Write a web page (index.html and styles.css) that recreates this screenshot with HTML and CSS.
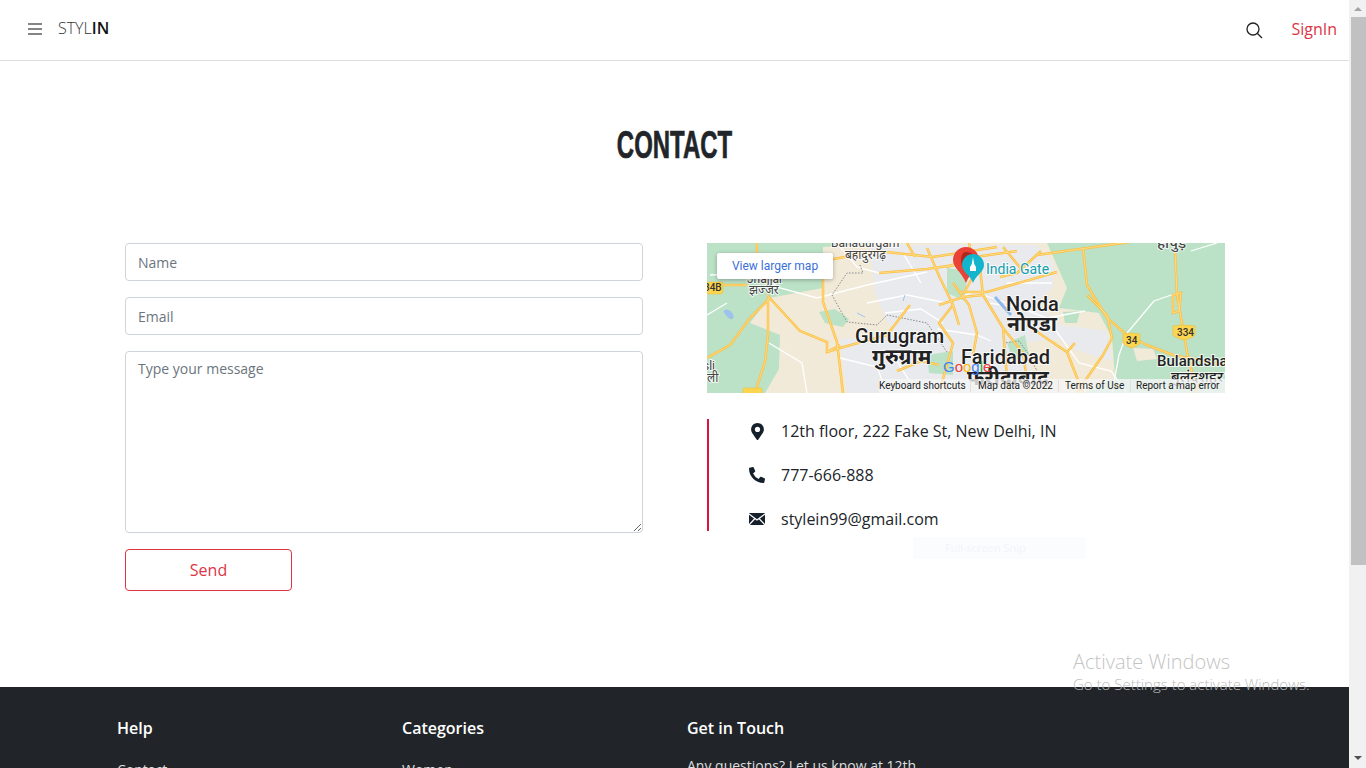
FILE: index.html
```html
<!DOCTYPE html>
<html lang="en">
<head>
<meta charset="utf-8">
<title>Contact</title>
<link rel="stylesheet" href="styles.css">
</head>
<body>
<div class="window">
  <div class="page">
    <header class="topbar">
      <div class="brand-group">
        <svg class="menu-icon" viewBox="0 0 14 12" width="14" height="12"><path d="M0 1h14M0 6h14M0 11h14"/></svg>
        <a class="brand"><span class="brand-light">STYL</span><span class="brand-strong">IN</span></a>
      </div>
      <div class="top-actions">
        <svg class="search-icon" viewBox="0 0 17 17" width="17" height="17"><circle cx="7" cy="7" r="6"/><path d="M11.200 11.200 16 16"/></svg>
        <a class="signin">SignIn</a>
      </div>
    </header>

    <main class="content">
      <div class="title-wrap"><h1 class="title">CONTACT</h1></div>
      <div class="columns">
        <form class="contact-form">
          <input class="field" type="text" placeholder="Name">
          <input class="field" type="text" placeholder="Email">
          <textarea class="field message" placeholder="Type your message"></textarea>
          <button class="send" type="button">Send</button>
        </form>
        <div class="contact-side">
          <div class="map">
            <svg class="map-art" viewBox="0 0 518 150" width="518" height="150">
              <defs>
                <g id="majors">
                  <path d="M0 42H40"/>
                  <path d="M50 0V12"/>
                  <path d="M63 55 43 75 23 102 0 115"/>
                  <path d="M60 52 93 88 120 99 120 109 133 102"/>
                  <path d="M61 55V92L58 119 48 150"/>
                  <path d="M116 30V59L130 99 136 150"/>
                  <path d="M116 18 170 8 226 14 290 4"/>
                  <path d="M220 5 233 35 246 62 252 82"/>
                  <path d="M203 62 180 92 133 105 120 109"/>
                  <path d="M273 25 276 52 296 85 300 135 304 150"/>
                  <path d="M253 49H280L350 29"/>
                  <path d="M330 12 423 -1"/>
                  <path d="M376 5 380 42 400 75 420 92 440 102 466 112 518 122"/>
                  <path d="M380 52 400 72 405 95 396 112 380 135 370 150"/>
                  <path d="M468 9 470 52 480 109 490 150"/>
                  <path d="M466 52 474 50 472 68 466 70Z"/>
                  <path d="M320 82 360 109 368 100"/>
                  <path d="M360 109 376 150"/>
                  <path d="M334 8 310 30 293 34"/>
                  <path d="M240 24 268 14 310 8"/>
                  <path d="M232 62 256 54 276 52"/>
                  <path d="M246 62 232 80 246 100 232 150"/>
                  <path d="M296 85 316 110 322 150"/>
                  <path d="M172 30 220 26 262 20"/>
                  <path d="M262 0 268 30 258 48"/>
                  <path d="M246 40 262 62 270 90 266 112"/>
                  <path d="M200 0 208 14"/>
                  <path d="M296 4 316 28"/>
                  <path d="M190 128 214 118 232 122"/>
                </g>
              </defs>
              <rect width="518" height="150" fill="#bbe2c6"/>
              <path class="tan" d="M58 150 72 126 73 92 43 80 62 55 116 45 116 4 170 0 340 0 360 45 352 65 392 70 405 95 408 135 376 150Z"/>
              <path class="green" d="M112 69 128 66 142 76 136 84 118 80Z"/>
              <path class="grey" d="M163 2H330L346 20 346 44 330 60 353 82 400 88 405 118 372 108 352 96 330 100 326 150H140L133 96 190 92 180 78 168 50Z"/>
              <path class="tan" d="M310 100 352 96 360 136 330 136Z"/>
              <path class="tan" d="M376 118 396 116 392 136 378 136Z"/>
              <path class="tan" d="M426 105 446 106 450 116 430 118Z"/>
              <path class="green" d="M220 112 246 108 246 132 222 130Z"/>
              <path class="green" d="M240 25 260 28 258 58 240 50Z"/>
              <path class="green" d="M356 69 373 68 370 80 358 80Z"/>
              <path class="green" d="M300 100 318 92 322 112 306 118Z"/>

              <g class="roads-white">
                <path d="M3 32 50 30 73 45 110 55 160 42 220 29"/>
                <path d="M130 0 150 24 172 30"/>
                <path d="M133 115 170 124 180 150"/>
                <path d="M190 118 210 150"/>
                <path d="M160 60 200 52 240 60 268 48"/>
                <path d="M276 52 300 60 340 75 378 68"/>
                <path d="M340 75 372 120 404 128 420 150"/>
                <path d="M447 58 420 90 412 112 405 150"/>
                <path d="M447 58 470 50"/>
                <path d="M62 100 95 120 100 150"/>
                <path d="M0 72 20 60"/>
                <path d="M230 86 270 92 284 98"/>
                <path d="M300 40 345 40"/>
                <path d="M484 8 510 0"/>
                <path d="M178 70 214 66 236 80"/>
                <path d="M282 60 320 66"/>
                <path d="M196 10 214 40"/>
              </g>
              <path class="dotted" d="M153 22 156 30 140 30 125 52 140 79 170 82 180 72 220 80 240 109"/>
              <path class="dotted" d="M296 100 312 98 322 112 332 132 338 148"/>

              <use href="#majors" class="road-outer"/>
              <use href="#majors" class="road-inner"/>

              <path class="water" d="M288 54 304 72"/>
              <path class="lake" d="M17 68c3-2 8 0 9 5s-6 3-9-5z"/>
              <path class="lake" d="M150 70l8 4M198 52l-2 6"/>

              <g class="shield">
                <path d="M-2 39H14q2 0 2 2V48q0 3-2 3H-2z"/>
                <path d="M416 91q8-2 17 0v9q-2 3-8 5-7-2-9-5z"/>
                <path d="M466 83q11-2 22 0v9q-2 3-11 5-9-2-11-5z"/>
                <path d="M37 145h17q1 0 1 2v5H36v-5q0-2 1-2z"/>
              </g>
              <text class="shield-text" x="-3" y="48">34B</text>
              <text class="shield-text" x="419" y="101">34</text>
              <text class="shield-text" x="470" y="93">334</text>

              <text class="place small" x="124" y="4">Bahadurgarh</text>
              <text class="place hin small" x="138" y="16">बहादुरगढ़</text>
              <text class="place small" x="40" y="40">Jhajjar</text>
              <text class="place hin small" x="42" y="51">झज्जर</text>
              <text class="place small" x="-4" y="127">sli</text>
              <text class="place hin small" x="0" y="139">ली</text>
              <text class="place hapur" x="450" y="5">हापुड़</text>
              <text class="place big" x="299" y="68">Noida</text>
              <text class="place hin-big" x="300" y="88">नोएडा</text>
              <text class="place big" x="148" y="100">Gurugram</text>
              <text class="place hin-big" x="165" y="121">गुरुग्राम</text>
              <text class="place big" x="254" y="121">Faridabad</text>
              <text class="place hin-big" x="260" y="142">फरीदाबाद</text>
              <text class="place mid" x="450" y="123">Bulandsha</text>
              <text class="place mid hin" x="464" y="139">बुलंदशहर</text>
              <text class="teal" x="279" y="31">India Gate</text>

              <text class="glogo" y="129"><tspan x="236" fill="#4285f4">G</tspan><tspan fill="#ea4335">o</tspan><tspan fill="#fbbc05">o</tspan><tspan fill="#4285f4">g</tspan><tspan fill="#34a853">l</tspan><tspan fill="#ea4335">e</tspan></text>

              <path d="M259 40c-4-11-13-15-13-23a13 13 0 0 1 26 0c0 8-9 12-13 23z" fill="#ea4335"/>
              <path d="M259 9a9 9 0 0 1 8 3l-6 18-6-7c-2-6-1-14 4-14z" fill="#b3261e"/>
              <path d="M266 40c-2-7-11-11-11-18a11 11 0 0 1 22 0c0 7-9 11-11 18z" fill="#12b5cb"/>
              <path d="M266 14l1.200 7 1.800 3v4h-6v-4l1.800-3z" fill="#fff"/>

              <rect class="attr-bg" x="172" y="136" width="346" height="14"/>
              <path class="attr-sep" d="M263.500 137v12M351.500 137v12M423.500 137v12"/>
              <text class="attr" x="172" y="146">Keyboard shortcuts</text>
              <text class="attr" x="271" y="146">Map data ©2022</text>
              <text class="attr" x="358" y="146">Terms of Use</text>
              <text class="attr" x="429" y="146">Report a map error</text>
            </svg>
            <a class="larger-map">View larger map</a>
          </div>
          <ul class="info">
            <li class="info-row">
              <svg class="info-icon" viewBox="0 0 384 512" width="13" height="17"><path d="M172.268 501.670C26.970 291.031 0 262.559 0 192 0 85.961 85.961 0 192 0s192 85.961 192 192c0 70.559-26.970 99.031-172.268 309.670-9.535 13.774-29.930 13.773-39.464 0zM192 272c44.183 0 80-35.817 80-80s-35.817-80-80-80-80 35.817-80 80 35.817 80 80 80z"/></svg>
              <span>12th floor, 222 Fake St, New Delhi, IN</span>
            </li>
            <li class="info-row">
              <svg class="info-icon" viewBox="0 0 512 512" width="16" height="16"><path d="M497.390 361.800l-112-48a24 24 0 0 0-28 6.900l-49.600 60.600A370.660 370.660 0 0 1 130.600 204.110l60.600-49.600a23.940 23.940 0 0 0 6.900-28l-48-112A24.160 24.160 0 0 0 122.600.610l-104 24A24 24 0 0 0 0 48c0 256.500 207.900 464 464 464a24 24 0 0 0 23.400-18.600l24-104a24.290 24.290 0 0 0-14.010-27.600z"/></svg>
              <span>777-666-888</span>
            </li>
            <li class="info-row">
              <svg class="info-icon" viewBox="0 0 16 12" width="16" height="12"><rect width="16" height="12" rx="1"/><path class="env-line" d="M0 1 8 7l8-6M0 12l6-6.500M16 12l-6-6.500"/></svg>
              <span>stylein99@gmail.com</span>
            </li>
          </ul>
        </div>
      </div>
    </main>

    <footer class="footer">
      <div class="foot-col">
        <h4 class="foot-title">Help</h4>
        <p class="foot-link">Contact</p>
      </div>
      <div class="foot-col">
        <h4 class="foot-title">Categories</h4>
        <p class="foot-link">Women</p>
      </div>
      <div class="foot-col">
        <h4 class="foot-title">Get in Touch</h4>
        <p class="foot-text">Any questions? Let us know at 12th</p>
      </div>
    </footer>
  </div>

  <div class="scrollbar">
    <span class="arrow-up"></span>
    <div class="thumb"></div>
    <span class="arrow-down"></span>
  </div>

  <div class="snip">Full-screen Snip</div>
  <div class="activate">
    <div class="activate-title">Activate Windows</div>
    <div class="activate-sub">Go to Settings to activate Windows.</div>
  </div>
</div>
</body>
</html>
```

FILE: styles.css
```css
* { box-sizing: border-box; }
html, body { margin: 0; height: 100%; overflow: hidden; }
body { font-family: "Open Sans", sans-serif; color: #212529; background: #fff; }

.window { position: relative; display: flex; width: 1366px; height: 768px; overflow: hidden; }
.page { flex: 1; min-width: 0; display: flex; flex-direction: column; height: 768px; overflow: hidden; }

.topbar { flex: none; height: 61px; display: flex; justify-content: space-between; align-items: center; border-bottom: 1px solid #dedede; padding: 0 12px 3px 28px; }
.brand-group { display: flex; align-items: center; gap: 16px; }
.menu-icon { fill: none; stroke: #858585; stroke-width: 2; margin-top: 1px; }
.brand { font-size: 16px; line-height: 22px; margin-bottom: 2px; }
.brand-light { font-weight: 300; color: #333; }
.brand-strong { font-weight: 600; color: #111; }
.top-actions { display: flex; align-items: center; gap: 28px; }
.search-icon { fill: none; stroke: #222; stroke-width: 1.300; margin-top: 3px; }
.signin { font-size: 16px; line-height: 22px; color: #dc3545; margin-top: 1px; }

.content { flex: none; height: 626px; }
.title-wrap { height: 182px; padding-top: 61px; text-align: center; }
.title { display: inline-block; margin: 0; font-family: "Liberation Sans", sans-serif; font-weight: 700; font-size: 38px; line-height: 46px; color: #212529; transform: scaleX(.63); -webkit-text-stroke: .7px #212529; }
.columns { display: flex; gap: 64px; padding-left: 125px; }

.contact-form { width: 518px; display: flex; flex-direction: column; align-items: flex-start; gap: 16px; }
.field { display: block; width: 518px; height: 38px; padding: 6px 12px; font-family: "Open Sans", sans-serif; font-size: 14px; line-height: 21px; color: #495057; background: #fff; border: 1px solid #ced4da; border-radius: 4px; outline: none; }
.field::placeholder { color: #6c757d; opacity: 1; }
.message { height: 182px; resize: vertical; }
.send { width: 167px; height: 42px; font-family: "Open Sans", sans-serif; font-size: 16px; color: #dc3545; background: #fff; border: 1px solid #dc3545; border-radius: 4px; padding: 0; }

.contact-side { width: 518px; }
.map { position: relative; width: 518px; height: 150px; overflow: hidden; }
.map-art { display: block; }
.larger-map { position: absolute; top: 10px; left: 10px; width: 116px; height: 26px; background: #fff; border-radius: 2px; box-shadow: 0 1px 4px rgba(0,0,0,.3); font-family: Roboto, sans-serif; font-size: 12px; line-height: 26px; text-align: center; color: #3b6fd8; }

.tan { fill: #f2ead8; }
.green { fill: #bbe2c6; }
.grey { fill: #e8eaed; }
.roads-white path { fill: none; stroke: #fff; stroke-width: 1.300; }
.dotted { fill: none; stroke: #85898c; stroke-width: 1; stroke-dasharray: 1.500 1.500; }
.road-outer { fill: none; stroke: #fdbf3f; stroke-width: 2.500; }
.road-inner { fill: none; stroke: #fee6a6; stroke-width: .7; }
.water { fill: none; stroke: #8fb9e8; stroke-width: 3; }
.lake { fill: #9cc2ee; stroke: #9cc2ee; stroke-width: 1; }
.shield path { fill: #fdd54f; stroke: #e8b93a; stroke-width: .5; }
.shield-text { font-family: Roboto, sans-serif; font-size: 10px; font-weight: 500; fill: #333; }
.place { font-family: Roboto, "Noto Sans", sans-serif; fill: #222; paint-order: stroke; stroke: rgba(255,255,255,.75); stroke-width: 2px; }
.place.small { font-size: 12px; fill: #444; font-weight: 400; }
.place.hapur { font-size: 15px; font-weight: 500; fill: #444; }
.place.big { font-size: 20px; font-weight: 500; }
.place.hin-big { font-size: 21px; font-weight: 700; }
.place.mid { font-size: 15px; font-weight: 500; }
.teal { font-family: Roboto, sans-serif; font-size: 14px; fill: #129eaf; paint-order: stroke; stroke: rgba(255,255,255,.8); stroke-width: 2px; }
.glogo { font-family: "Liberation Sans", sans-serif; font-size: 15px; }
.attr-bg { fill: #f5f5f5; fill-opacity: .78; }
.attr-sep { stroke: #e0e0e0; stroke-width: 1; }
.attr { font-family: Roboto, sans-serif; font-size: 10px; fill: #222; }

.info { list-style: none; margin: 26px 0 0; padding: 0 0 0 40px; height: 112px; border-left: 2px solid #dc143c; display: flex; flex-direction: column; gap: 22px; }
.info-row { display: flex; align-items: center; height: 22px; font-size: 16px; line-height: 22px; color: #212529; position: relative; top: 1px; }
.info-icon { flex: none; fill: #15202b; position: absolute; left: 0; }
.info-row:nth-child(1) .info-icon { left: 2px; }
.info-row span { margin-left: 32px; }
.env-line { fill: none; stroke: #fff; stroke-width: 1.200; }

.footer { flex: none; height: 81px; background: #212529; display: flex; padding: 29px 0 0 117px; overflow: hidden; }
.foot-col { width: 285px; flex: none; }
.foot-title { margin: 0; font-size: 16px; line-height: 24px; font-weight: 600; color: #fff; }
.foot-text { margin: 15px 0 0; font-size: 14px; line-height: 21px; color: #ddd; }
.foot-link { margin: 19px 0 0; font-size: 14px; line-height: 21px; color: #ddd; }

.scrollbar { flex: none; width: 17px; height: 768px; background: #f1f1f1; display: flex; flex-direction: column; align-items: center; }
.arrow-up { flex: none; width: 0; height: 0; margin-top: 7px; border: 4px solid transparent; border-top: 0; border-bottom: 4px solid #a3a3a3; }
.thumb { flex: none; width: 15px; height: 548px; margin-top: 6px; align-self: flex-end; background: #c1c1c1; }
.arrow-down { flex: none; width: 0; height: 0; margin-top: auto; margin-bottom: 8px; border: 4px solid transparent; border-bottom: 0; border-top: 4px solid #505050; }

.snip { position: absolute; left: 913px; top: 537px; width: 173px; height: 22px; background: #fbfcfe; color: #f3f4f7; font-size: 11px; line-height: 22px; padding-left: 32px; }
.activate { position: absolute; left: 1073px; top: 649px; color: #c4c4c4; font-family: "Open Sans", sans-serif; font-weight: 300; white-space: nowrap; pointer-events: none; }
.activate-title { font-size: 20px; line-height: 26px; }
.activate-sub { font-size: 15px; line-height: 19px; color: #bdbdbd; }
```
